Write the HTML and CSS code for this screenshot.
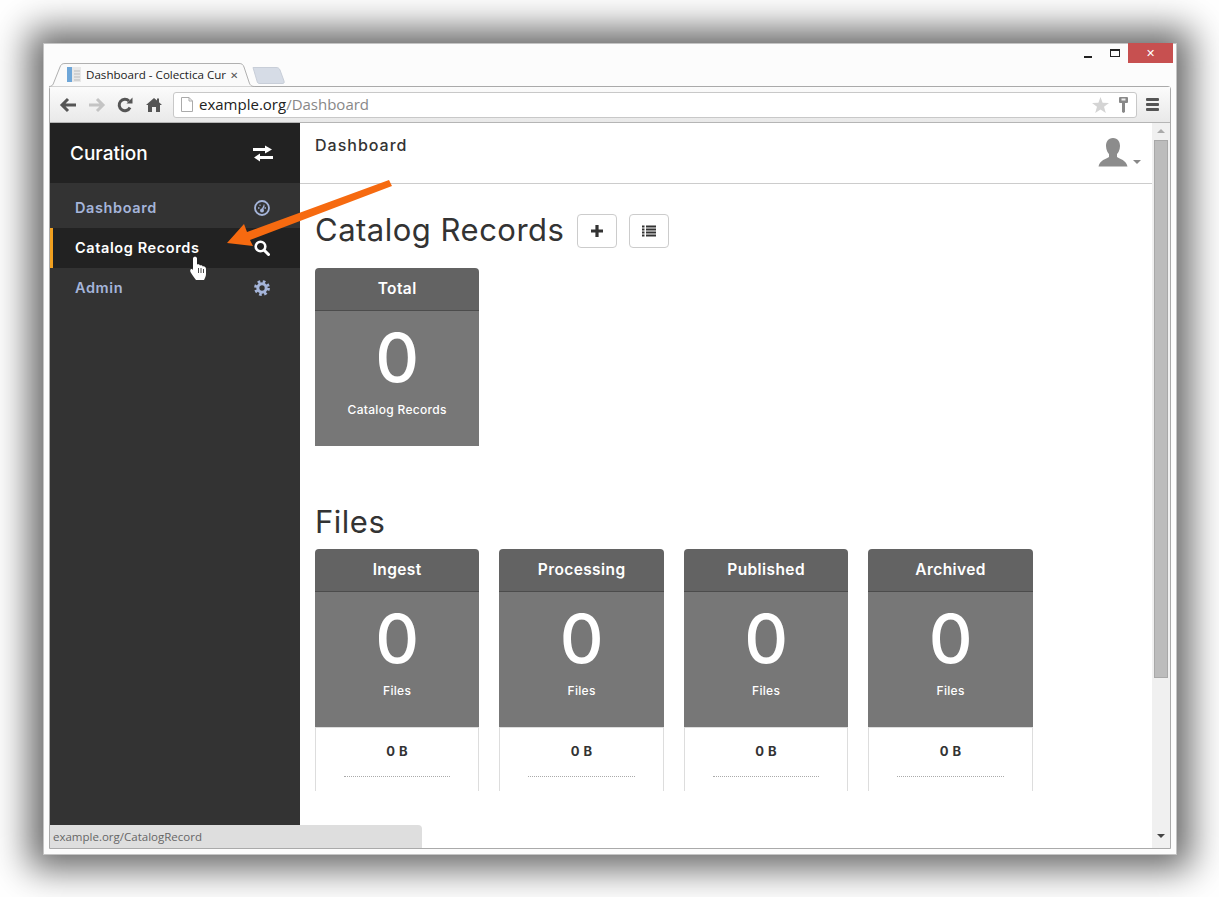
FILE: index.html
```html
<!DOCTYPE html>
<html lang="en">
<head>
    <meta charset="UTF-8">
    <title>Dashboard - Colectica Curation</title>
    <link rel="stylesheet" href="styles.css">
</head>
<body>
    <div class="window">
        <!-- Title bar with tabs -->
        <div class="titlebar">
            <div class="tab">
                <svg class="tab-shape" width="206" height="24" viewBox="0 0 206 24"><path d="M0 23.5 C3 23.5 4 22 5 19 L11 4 C12 1.5 13 .5 16 .5 L190 .5 C193 .5 194 1.5 195 4 L200 19 C201 22 202 23.5 206 23.5" fill="#fafafa" stroke="#b0b0b0"/></svg>
                <svg class="tab-icon" width="15" height="16" viewBox="0 0 15 16"><rect x="0" y="0" width="14" height="15" fill="#e8e8e8"/><rect x="0" y="0" width="5" height="15" fill="#6ea6d8"/><path d="M7 4h6M7 7h6M7 10h6M7 13h6" stroke="#bbb"/></svg>
                <span class="tab-title">Dashboard - Colectica Cur</span>
                <span class="tab-close">&#10005;</span>
            </div>
            <svg class="newtab" width="33" height="17" viewBox="0 0 33 17"><path d="M1 0.5 L24 0.5 C26 0.5 27 1 28 3 L32 14 C32.500 16 32 16.500 30 16.500 L8 16.500 C6 16.500 5.500 16 5 14 Z" fill="#d6dce6" stroke="#c8ced8"/></svg>
            <div class="controls">
                <span class="ctl-min"></span>
                <span class="ctl-max"></span>
                <span class="ctl-close">&#10005;</span>
            </div>
        </div>

        <div class="browser">
            <!-- Toolbar -->
            <div class="toolbar">
                <svg class="tool" width="18" height="16" viewBox="0 0 18 16"><path d="M9 2 L3 8 L9 14 M3 8 H17" fill="none" stroke="#555" stroke-width="3"/></svg>
                <svg class="tool" width="18" height="16" viewBox="0 0 18 16"><path d="M9 2 L15 8 L9 14 M15 8 H1" fill="none" stroke="#c4c4c4" stroke-width="3"/></svg>
                <svg class="tool" width="16" height="16" viewBox="0 0 16 16"><path d="M13 10.500 A5.700 5.700 0 1 1 12 4" fill="none" stroke="#555" stroke-width="3"/><path d="M9.500 6.500 L15.500 6.500 L15.500 .5 Z" fill="#555"/></svg>
                <svg class="tool tool-home" width="16" height="16" viewBox="0 0 16 16"><path d="M8 1 L11 3.500 L11 1.500 L13 1.500 L13 5.200 L16 8 L14 8 L14 15 L10 15 L10 10 L6 10 L6 15 L2 15 L2 8 L0 8 Z" fill="#555"/></svg>
                <div class="address">
                    <svg class="page-icon" width="12" height="15" viewBox="0 0 12 15"><path d="M.5 .5 H8 L11.500 4 V14.500 H.5 Z M8 .5 V4 H11.500" fill="#fff" stroke="#aaa"/></svg>
                    <span class="url">example.org<span class="url-path">/Dashboard</span></span>
                    <svg class="star" width="17" height="16" viewBox="0 0 17 16"><path d="M8.500 0 L10.600 5.700 L17 6 L12 9.800 L13.800 16 L8.500 12.400 L3.200 16 L5 9.800 L0 6 L6.400 5.700 Z" fill="#d4d4d4"/></svg>
                    <svg width="11" height="16" viewBox="0 0 11 16"><path d="M1 1 Q1 0 2 0 H9 Q10 0 10 1 V5 Q10 6 9 6 H7 V15 L5.500 16 L4 15 V6 H2 Q1 6 1 5 Z" fill="#888"/><rect x="3.500" y="1.500" width="4" height="2" fill="#eee"/></svg>
                </div>
                <div class="menu-icon"><span></span><span></span><span></span></div>
            </div>

            <!-- Page -->
            <div class="page">
                <div class="sidebar">
                    <div class="brand">
                        <span>Curation</span>
                        <svg width="20" height="17" viewBox="0 0 20 17"><path d="M0 3 H12 V.5 L19 4.500 L12 8.500 V6 H0 Z M20 11 H7 V8.500 L1 12.500 L7 16.500 V14 H20 Z" fill="#fff"/></svg>
                    </div>
                    <ul class="nav">
                        <li class="nav-item">
                            <a>Dashboard</a>
                            <svg width="16" height="16" viewBox="0 0 16 16"><circle cx="8" cy="8" r="7" fill="#333" stroke="#a5b5da" stroke-width="1.800"/><path d="M4 8h1.500M10.500 8h1.500M5.500 5.200h1M9.500 5.200h1" stroke="#a5b5da" stroke-width="1.400"/><path d="M8 10 L10 6" stroke="#a5b5da" stroke-width="1.600"/><circle cx="8" cy="10.500" r="2" fill="#a5b5da"/></svg>
                        </li>
                        <li class="nav-item active">
                            <a>Catalog Records</a>
                            <svg width="16" height="16" viewBox="0 0 16 16"><circle cx="6.500" cy="6.500" r="4.800" fill="none" stroke="#fff" stroke-width="2.600"/><path d="M10 10 L14.500 14.500" stroke="#fff" stroke-width="3" stroke-linecap="round"/></svg>
                        </li>
                        <li class="nav-item">
                            <a>Admin</a>
                            <svg width="16" height="16" viewBox="0 0 16 16"><circle cx="8" cy="8" r="6.200" fill="none" stroke="#a5b5da" stroke-width="3.400" stroke-dasharray="2.500 2.370"/><circle cx="8" cy="8" r="4.200" fill="none" stroke="#a5b5da" stroke-width="3"/></svg>
                        </li>
                    </ul>
                </div>

                <div class="main">
                    <div class="topbar">
                        <span class="topbar-title">Dashboard</span>
                        <div class="user">
                            <svg width="30" height="29" viewBox="0 0 30 29"><path d="M15 0 C20 0 22 4 22 8 C22 12 20 15 19 16 L19 19 C22 21 28 22 29.500 28.500 L.5 28.500 C2 22 8 21 11 19 L11 16 C10 15 8 12 8 8 C8 4 10 0 15 0 Z" fill="#8c8c8c"/></svg>
                            <span class="caret"></span>
                        </div>
                    </div>
                    <div class="content">
                        <div class="section-head">
                            <h2>Catalog Records</h2>
                            <button class="btn"><svg width="14" height="14" viewBox="0 0 14 14"><path d="M7 1 V13 M1 7 H13" stroke="#333" stroke-width="3.200"/></svg></button>
                            <button class="btn"><svg width="14" height="12" viewBox="0 0 14 12"><path d="M0 1.500h2.500M4 1.500h10M0 4.500h2.500M4 4.500h10M0 7.500h2.500M4 7.500h10M0 10.500h2.500M4 10.500h10" stroke="#333" stroke-width="2"/></svg></button>
                        </div>
                        <div class="tiles">
                            <div class="tile">
                                <div class="tile-head">Total</div>
                                <div class="tile-body">
                                    <div class="tile-num">0</div>
                                    <div class="tile-label">Catalog Records</div>
                                </div>
                            </div>
                        </div>

                        <h2 class="files-head">Files</h2>
                        <div class="tiles">
                            <div class="tile">
                                <div class="tile-head">Ingest</div>
                                <div class="tile-body"><div class="tile-num">0</div><div class="tile-label">Files</div></div>
                                <div class="tile-foot"><div class="tile-size">0 B</div></div>
                            </div>
                            <div class="tile">
                                <div class="tile-head">Processing</div>
                                <div class="tile-body"><div class="tile-num">0</div><div class="tile-label">Files</div></div>
                                <div class="tile-foot"><div class="tile-size">0 B</div></div>
                            </div>
                            <div class="tile">
                                <div class="tile-head">Published</div>
                                <div class="tile-body"><div class="tile-num">0</div><div class="tile-label">Files</div></div>
                                <div class="tile-foot"><div class="tile-size">0 B</div></div>
                            </div>
                            <div class="tile">
                                <div class="tile-head">Archived</div>
                                <div class="tile-body"><div class="tile-num">0</div><div class="tile-label">Files</div></div>
                                <div class="tile-foot"><div class="tile-size">0 B</div></div>
                            </div>
                        </div>
                    </div>
                </div>

                <div class="scrollbar">
                    <span class="arrow-up"></span>
                    <div class="thumb"></div>
                    <span class="arrow-down"></span>
                </div>

                <div class="status">example.org/CatalogRecord</div>
            </div>
        </div>

        <!-- Annotation and mouse pointer lie over the page -->
        <svg class="annotation" width="200" height="80" viewBox="0 0 200 80"><path d="M189 0 L192 6 L50 60 L53 66 L27 63 L44 44 L47 52 Z" fill="#f66a10"/></svg>
        <svg class="pointer" width="17" height="24" viewBox="0 0 17 24"><path d="M3 2.500 C3 .2 7 .2 7 2.500 L7 8.500 C8.500 8 9.500 8.500 10 9.500 C11 9 12.500 9.500 12.800 10.500 C14 10 16 11 16 13 L16 18 C16 20 15 22 14 24 L6 24 C4 21.500 2 18.500 .5 16 C-.5 13.500 1.500 12 3 14 Z" fill="#fff"/><path d="M8.500 12v5M11 12v5M13.500 13v4" stroke="#333" stroke-width=".9"/></svg>
    </div>
</body>
</html>
```

FILE: styles.css
```css
/* General */
body {
    margin: 0;
    background-color: #fff;
    font-family: 'Inter', sans-serif;
    color: #333;
    height: 897px;
    overflow: hidden;
}

.window {
    position: relative;
    box-sizing: border-box;
    width: 1134px;
    height: 812px;
    margin: 43px 0 0 43px;
    padding: 0 5px 5px 5px;
    background-color: #fcfcfc;
    border: 1px solid #c4c4c4;
    box-shadow: 0 0 34px 14px rgba(0, 0, 0, 0.6);
    display: flex;
    flex-direction: column;
}

/* Title bar */
.titlebar {
    position: relative;
    height: 42px;
    flex-shrink: 0;
    display: flex;
    align-items: flex-end;
}

.tab {
    position: relative;
    box-sizing: border-box;
    width: 206px;
    height: 24px;
    margin-bottom: -1px;
    padding: 0 0 1px 18px;
    display: flex;
    align-items: center;
    z-index: 2;
    font-family: 'Open Sans', sans-serif;
    font-size: 11.600px;
    color: #222;
}

.tab-shape {
    position: absolute;
    left: 0;
    top: 0;
}

.tab-icon {
    position: relative;
    margin-right: 4px;
}

.tab-title {
    position: relative;
    width: 140px;
    white-space: nowrap;
}

.tab-close {
    position: relative;
    margin-left: 4px;
    font-size: 10px;
    color: #555;
}

.newtab {
    margin: 0 0 2px -3px;
}

.controls {
    position: absolute;
    right: -2px;
    top: -1px;
    display: flex;
    align-items: flex-start;
}

.ctl-min {
    width: 8px;
    height: 2px;
    margin: 13px 18px 0 0;
    background-color: #222;
}

.ctl-max {
    box-sizing: border-box;
    width: 10px;
    height: 8px;
    margin: 6px 8px 0 0;
    border: 1px solid #222;
    border-top-width: 2px;
}

.ctl-close {
    width: 45px;
    height: 20px;
    background-color: #c75050;
    color: #fff;
    font-size: 11px;
    line-height: 20px;
    text-align: center;
}

/* Browser frame */
.browser {
    flex: 1;
    min-height: 0;
    display: flex;
    flex-direction: column;
    border: 1px solid #aaa;
    border-radius: 3px 3px 0 0;
}

.toolbar {
    height: 36px;
    flex-shrink: 0;
    box-sizing: border-box;
    padding: 0 11px 0 9px;
    display: flex;
    align-items: center;
    gap: 11px;
    background: linear-gradient(#fbfbfb, #e9e9e9);
    border-bottom: 1px solid #b5b5b5;
}

.tool {
    flex-shrink: 0;
}

.tool-home {
    margin-left: 2px;
}

.address {
    box-sizing: border-box;
    flex: 1;
    height: 26px;
    padding: 0 7px;
    display: flex;
    align-items: center;
    background-color: #fff;
    border: 1px solid #c8c8c8;
    border-radius: 3px;
}

.page-icon {
    margin-right: 6px;
}

.url {
    flex: 1;
    padding-bottom: 2px;
    font-family: 'Open Sans', sans-serif;
    font-size: 15px;
    color: #222;
}

.url-path {
    color: #888;
}

.star {
    margin-right: 9px;
}

.menu-icon {
    width: 13px;
    margin-left: -2px;
    display: flex;
    flex-direction: column;
    gap: 2px;
}

.menu-icon span {
    height: 3px;
    background-color: #555;
    border-radius: 1px;
}

/* Page */
.page {
    position: relative;
    flex: 1;
    min-height: 0;
    display: flex;
    background-color: #fff;
}

.sidebar {
    width: 250px;
    flex-shrink: 0;
    background-color: #333;
}

.brand {
    height: 60px;
    box-sizing: border-box;
    padding: 0 27px 0 20px;
    display: flex;
    align-items: center;
    justify-content: space-between;
    background-color: #222;
    color: #fff;
    font-size: 19px;
    font-weight: 500;
}

.nav {
    list-style: none;
    margin: 0;
    padding: 0;
}

.nav-item {
    box-sizing: border-box;
    height: 40px;
    padding: 0 30px 0 25px;
    display: flex;
    align-items: center;
    justify-content: space-between;
    color: #a5b5da;
    font-size: 14.500px;
    font-weight: 600;
    letter-spacing: 0.6px;
}

.nav-item a {
    padding-bottom: 2px;
}

.nav-item:first-child {
    height: 45px;
    padding-top: 5px;
}

.nav-item.active {
    background-color: #222;
    border-left: 3px solid #f0a020;
    padding-left: 22px;
    color: #fff;
}

/* Main column */
.main {
    flex: 1;
    min-width: 0;
}

.topbar {
    height: 61px;
    box-sizing: border-box;
    padding: 13px 11px 0 15px;
    display: flex;
    justify-content: space-between;
    align-items: flex-start;
    border-bottom: 1px solid #ccc;
}

.topbar-title {
    font-size: 16px;
    font-weight: 500;
    line-height: 19px;
    letter-spacing: 1px;
}

.user {
    display: flex;
    align-items: flex-end;
    gap: 5px;
    margin-top: 2px;
}

.caret {
    width: 0;
    height: 0;
    margin-bottom: 3px;
    border-left: 4px solid transparent;
    border-right: 4px solid transparent;
    border-top: 4px solid #888;
}

.content {
    padding: 30px 0 0 15px;
}

.section-head {
    display: flex;
    align-items: center;
    gap: 12px;
    height: 34px;
    margin-bottom: 20px;
}

.section-head h2 {
    padding-bottom: 2px;
    margin-right: 1px;
}

h2 {
    margin: 0;
    font-size: 31px;
    font-weight: 400;
    line-height: 38px;
    color: #333;
    letter-spacing: 0.5px;
}

.btn {
    width: 40px;
    height: 34px;
    padding: 0;
    display: flex;
    align-items: center;
    justify-content: center;
    background-color: #fff;
    border: 1px solid #ccc;
    border-radius: 4px;
}

.files-head {
    margin-top: 57px;
    margin-bottom: 8px;
}

/* Tiles */
.tiles {
    display: grid;
    grid-template-columns: repeat(4, 164.300px);
    column-gap: 20.200px;
}

.tile-head {
    box-sizing: border-box;
    height: 43px;
    background-color: #636363;
    border-bottom: 1px solid #4c4c4c;
    border-radius: 4px 4px 0 0;
    color: #fff;
    font-size: 15.500px;
    font-weight: 600;
    line-height: 41px;
    text-align: center;
    letter-spacing: 0.4px;
}

.tile-body {
    height: 135px;
    background-color: #777;
    color: #fff;
    text-align: center;
}

.tile-num {
    padding-top: 6px;
    font-size: 68px;
    font-weight: 500;
    line-height: 80px;
}

.tile-label {
    margin-top: 5px;
    font-size: 12px;
    font-weight: 500;
    line-height: 16px;
    letter-spacing: 0.3px;
}

.tile-foot {
    box-sizing: border-box;
    height: 64px;
    padding: 16px 28px 0 28px;
    background-color: #fff;
    border: 1px solid #ddd;
    border-width: 1px 1px 0 1px;
}

.tile-size {
    height: 32px;
    border-bottom: 1px dotted #aaa;
    font-size: 13px;
    font-weight: 700;
    line-height: 15px;
    text-align: center;
    letter-spacing: 0.5px;
}

/* Scrollbar */
.scrollbar {
    position: relative;
    width: 18px;
    flex-shrink: 0;
    box-sizing: border-box;
    padding-top: 6px;
    background-color: #f0f0f0;
    display: flex;
    flex-direction: column;
    align-items: center;
}

.arrow-up {
    width: 0;
    height: 0;
    border-left: 4px solid transparent;
    border-right: 4px solid transparent;
    border-bottom: 4px solid #aaa;
}

.thumb {
    box-sizing: border-box;
    width: 14px;
    height: 538px;
    margin-top: 7px;
    background-color: #bcbcbc;
    border: 1px solid #a8a8a8;
}

.arrow-down {
    width: 0;
    height: 0;
    margin-top: 156px;
    border-left: 4px solid transparent;
    border-right: 4px solid transparent;
    border-top: 4px solid #444;
}

/* Overlays */
.status {
    position: absolute;
    left: 0;
    bottom: 0;
    box-sizing: border-box;
    width: 372px;
    height: 23px;
    padding-left: 3px;
    background-color: #dedede;
    border-radius: 0 4px 0 0;
    font-family: 'Open Sans', sans-serif;
    font-size: 11.500px;
    line-height: 24px;
    color: #666;
}

.annotation {
    position: absolute;
    left: 156px;
    top: 136px;
}

.pointer {
    position: absolute;
    left: 146px;
    top: 212px;
}
```
